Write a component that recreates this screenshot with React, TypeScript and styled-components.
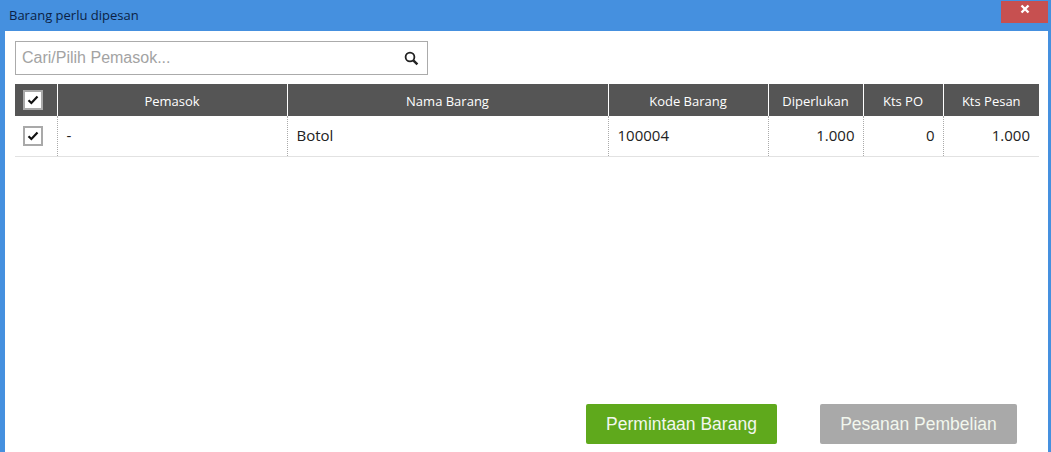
import { createGlobalStyle } from 'styled-components';
import styled from 'styled-components';

const GlobalStyle = createGlobalStyle`
  html, body {
    margin: 0;
    padding: 0;
    background: #fff;
  }
`;

const Window = styled.div`
  width: 1051px;
  height: 452px;
  box-sizing: border-box;
  display: flex;
  flex-direction: column;
  overflow: hidden;
  background: #4590df;
  padding: 1px 3px 0 5px;
  font-family: "Open Sans", "Noto Sans", sans-serif;
`;

const TitleBar = styled.div`
  height: 30px;
  flex: none;
  display: flex;
  justify-content: space-between;
  align-items: flex-start;
`;

const Title = styled.div`
  font-size: 13px;
  line-height: 29px;
  padding-left: 4px;
  color: #0b1f45;
`;

const CloseButton = styled.div`
  width: 47px;
  height: 22px;
  box-sizing: border-box;
  padding-bottom: 6px;
  display: flex;
  align-items: center;
  justify-content: center;
  background: #c75050;
`;

const Content = styled.div`
  flex: 1;
  background: #fff;
  padding: 10px 9px 8px 10px;
  display: flex;
  flex-direction: column;
`;

const SearchBox = styled.div`
  width: 413px;
  height: 34px;
  box-sizing: border-box;
  border: 1px solid #ababab;
  display: flex;
  align-items: center;
  justify-content: space-between;
  padding: 0 8px 0 6px;
  margin-bottom: 9px;
`;

const Placeholder = styled.span`
  font-family: "Liberation Sans", Arial, sans-serif;
  font-size: 16px;
  color: #a3a3a3;
`;

const Table = styled.table`
  width: 1024px;
  table-layout: fixed;
  border-collapse: collapse;
`;

const HeadCell = styled.th<{ $w: number }>`
  width: ${p => p.$w}px;
  height: 32px;
  box-sizing: border-box;
  padding: 2px 0 0;
  background: #555;
  color: #fff;
  font-weight: 400;
  font-size: 13px;
  text-align: center;
  border-left: 1px solid #fff;
  &:first-child {
    border-left: 0;
    padding: 0;
  }
`;

const Row = styled.tr`
  border-bottom: 1px solid #e2e2e2;
`;

const Cell = styled.td<{ $right?: boolean }>`
  height: 40px;
  box-sizing: border-box;
  padding: 0 ${p => (p.$right ? 8 : 9)}px 2px;
  color: #222;
  font-size: 15px;
  text-align: ${p => (p.$right ? 'right' : 'left')};
  border-left: 1px dotted #aaa;
  &:first-child {
    border-left: 0;
    padding: 0;
  }
  &:last-child {
    padding-right: 9px;
  }
`;

const CheckBox = styled.div`
  width: 20px;
  height: 20px;
  box-sizing: border-box;
  margin-left: 8px;
  background: #fff;
  border: 2px solid #a9a9a9;
  display: flex;
  align-items: center;
  justify-content: center;
`;

const Footer = styled.div`
  margin-top: auto;
  display: flex;
  gap: 43px;
  padding-left: 571px;
`;

const ActionButton = styled.button<{ $color: string; $w: number }>`
  width: ${p => p.$w}px;
  height: 40px;
  border: 0;
  border-radius: 2px;
  padding: 0;
  background: ${p => p.$color};
  color: #f2f7ee;
  font-family: "Liberation Sans", Arial, sans-serif;
  font-size: 17.5px;
`;

const Check = () => (
  <svg width="12" height="10" viewBox="0 0 12 10">
    <path d="M1.5 5.2 L4.4 8 L10.5 1.6" fill="none" stroke="#111" strokeWidth="2.2" />
  </svg>
);

const columns = [
  { name: 'Pemasok', w: 230 },
  { name: 'Nama Barang', w: 321 },
  { name: 'Kode Barang', w: 160 },
  { name: 'Diperlukan', w: 95 },
  { name: 'Kts PO', w: 80 },
  { name: 'Kts Pesan', w: 96 },
];

const App = () => {
  return (
    <Window>
      <GlobalStyle />
      <TitleBar>
        <Title>Barang perlu dipesan</Title>
        <CloseButton>
          <svg width="10" height="10" viewBox="0 0 10 10">
            <path d="M1.5 1.5 L8.5 8.5 M8.5 1.5 L1.5 8.5" stroke="#fff" strokeWidth="2.4" />
          </svg>
        </CloseButton>
      </TitleBar>
      <Content>
        <SearchBox>
          <Placeholder>Cari/Pilih Pemasok...</Placeholder>
          <svg width="15" height="15" viewBox="0 0 15 15">
            <circle cx="6" cy="6" r="4.4" fill="none" stroke="#222" strokeWidth="1.8" />
            <path d="M9.3 9.3 L13.4 13.4" stroke="#222" strokeWidth="2.4" />
          </svg>
        </SearchBox>
        <Table>
          <thead>
            <tr>
              <HeadCell $w={42}>
                <CheckBox>
                  <Check />
                </CheckBox>
              </HeadCell>
              {columns.map(c => (
                <HeadCell key={c.name} $w={c.w}>
                  {c.name}
                </HeadCell>
              ))}
            </tr>
          </thead>
          <tbody>
            <Row>
              <Cell>
                <CheckBox>
                  <Check />
                </CheckBox>
              </Cell>
              <Cell>-</Cell>
              <Cell>Botol</Cell>
              <Cell>100004</Cell>
              <Cell $right>1.000</Cell>
              <Cell $right>0</Cell>
              <Cell $right>1.000</Cell>
            </Row>
          </tbody>
        </Table>
        <Footer>
          <ActionButton $color="#5fa91c" $w={191}>Permintaan Barang</ActionButton>
          <ActionButton $color="#a9a9a9" $w={197}>Pesanan Pembelian</ActionButton>
        </Footer>
      </Content>
    </Window>
  );
};

export default App;
